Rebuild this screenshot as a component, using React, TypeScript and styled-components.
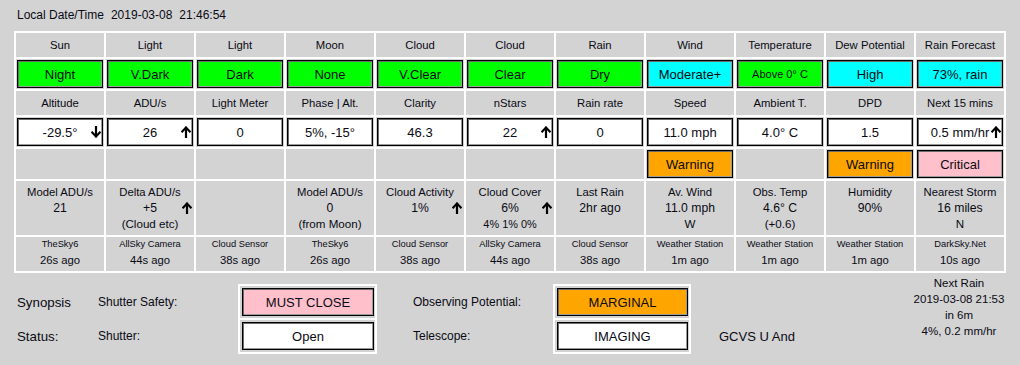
import React from "react";
import styled, { createGlobalStyle } from "styled-components";

type Tone = "green" | "cyan" | "orange" | "pink" | "white";
type Trend = "up" | "down";

const tones: Record<Tone, string> = {
  green: "#00ff00",
  cyan: "#00ffff",
  orange: "#ffa500",
  pink: "#ffc0cb",
  white: "#ffffff",
};

interface Column {
  head: string;
  status: string;
  tone: Tone;
  small?: boolean;
  sub: string;
  value: string;
  trend?: Trend;
  alert?: { text: string; tone: Tone };
  detail: string[];
  detailTrend?: Trend;
  noteSmall?: boolean;
  source: string;
  age: string;
}

const columns: Column[] = [
  { head: "Sun", status: "Night", tone: "green", sub: "Altitude", value: "-29.5°", trend: "down", detail: ["Model ADU/s", "21"], source: "TheSky6", age: "26s ago" },
  { head: "Light", status: "V.Dark", tone: "green", sub: "ADU/s", value: "26", trend: "up", detail: ["Delta ADU/s", "+5", "(Cloud etc)"], detailTrend: "up", source: "AllSky Camera", age: "44s ago" },
  { head: "Light", status: "Dark", tone: "green", sub: "Light Meter", value: "0", detail: [], source: "Cloud Sensor", age: "38s ago" },
  { head: "Moon", status: "None", tone: "green", sub: "Phase | Alt.", value: "5%, -15°", detail: ["Model ADU/s", "0", "(from Moon)"], source: "TheSky6", age: "26s ago" },
  { head: "Cloud", status: "V.Clear", tone: "green", sub: "Clarity", value: "46.3", detail: ["Cloud Activity", "1%"], detailTrend: "up", source: "Cloud Sensor", age: "38s ago" },
  { head: "Cloud", status: "Clear", tone: "green", sub: "nStars", value: "22", trend: "up", detail: ["Cloud Cover", "6%", "4% 1% 0%"], detailTrend: "up", noteSmall: true, source: "AllSky Camera", age: "44s ago" },
  { head: "Rain", status: "Dry", tone: "green", sub: "Rain rate", value: "0", detail: ["Last Rain", "2hr ago"], source: "Cloud Sensor", age: "38s ago" },
  { head: "Wind", status: "Moderate+", tone: "cyan", sub: "Speed", value: "11.0 mph", alert: { text: "Warning", tone: "orange" }, detail: ["Av. Wind", "11.0 mph", "W"], source: "Weather Station", age: "1m ago" },
  { head: "Temperature", status: "Above 0° C", tone: "green", small: true, sub: "Ambient T.", value: "4.0° C", detail: ["Obs. Temp", "4.6° C", "(+0.6)"], source: "Weather Station", age: "1m ago" },
  { head: "Dew Potential", status: "High", tone: "cyan", sub: "DPD", value: "1.5", alert: { text: "Warning", tone: "orange" }, detail: ["Humidity", "90%"], source: "Weather Station", age: "1m ago" },
  { head: "Rain Forecast", status: "73%, rain", tone: "cyan", sub: "Next 15 mins", value: "0.5 mm/hr", trend: "up", alert: { text: "Critical", tone: "pink" }, detail: ["Nearest Storm", "16 miles", "N"], source: "DarkSky.Net", age: "10s ago" },
];

const GlobalStyle = createGlobalStyle`
  body {
    margin: 0;
    background: #d3d3d3;
    font-family: "Liberation Sans", Arial, sans-serif;
    color: #0a0a14;
  }
`;

const Page = styled.div`
  padding: 7px 14px 0;
`;

const Header = styled.div`
  display: flex;
  gap: 7px;
  padding-left: 3px;
  height: 16px;
  line-height: 16px;
  font-size: 12px;
  margin-bottom: 8px;
`;

const Grid = styled.div`
  display: grid;
  grid-template-columns: repeat(11, 88px);
  grid-template-rows: 24px 30px 24px 30px 30px 54px 34px;
  gap: 2px;
  padding: 2px;
  background: #fff;
  width: fit-content;
`;

const Cell = styled.div`
  background: #d3d3d3;
  min-width: 0;
  overflow: hidden;
`;

const HeadCell = styled(Cell)`
  display: flex;
  align-items: center;
  justify-content: center;
  font-size: 11.3px;
  white-space: nowrap;
`;

const BoxCell = styled(Cell)`
  padding: 1px;
`;

const StatusBox = styled.div<{ $tone: Tone; $small?: boolean }>`
  position: relative;
  height: 100%;
  box-sizing: border-box;
  display: flex;
  align-items: center;
  justify-content: center;
  background: ${(p) => tones[p.$tone]};
  border: 1px solid #000;
  box-shadow: inset 1px 1px 0 #6a6a6a, inset -1px -1px 0 #9a9a9a;
  font-size: ${(p) => (p.$small ? "11px" : "13px")};
  white-space: nowrap;
`;

const ArrowWrap = styled.span<{ $right: number }>`
  position: absolute;
  right: ${(p) => p.$right}px;
  top: 50%;
  transform: translateY(-50%);
  display: flex;
`;

const DetailCell = styled(Cell)`
  display: flex;
  flex-direction: column;
  align-items: stretch;
  padding-top: 3px;
  text-align: center;
`;

const DetailLine = styled.div<{ $size: number }>`
  position: relative;
  font-size: ${(p) => p.$size}px;
  line-height: 16px;
  white-space: nowrap;
`;

const SourceCell = styled(Cell)`
  display: flex;
  flex-direction: column;
  text-align: center;
  white-space: nowrap;
`;

const SourceName = styled.div`
  font-size: 9.3px;
  line-height: 14px;
`;

const SourceAge = styled.div`
  font-size: 11.3px;
  line-height: 18px;
`;

const Footer = styled.div`
  display: flex;
  padding: 2px 0 0 3px;
`;

const LabelCol = styled.div<{ $width: number; $gap?: number }>`
  width: ${(p) => p.$width}px;
  margin-left: ${(p) => p.$gap ?? 0}px;
  margin-top: 9px;
  padding-top: 2px;
  display: flex;
  flex-direction: column;
  gap: 2px;
  flex-shrink: 0;
`;

const Label = styled.div<{ $size: number }>`
  height: 32px;
  display: flex;
  align-items: center;
  font-size: ${(p) => p.$size}px;
  white-space: nowrap;
`;

const BoxStack = styled.div<{ $width: number }>`
  width: ${(p) => p.$width}px;
  box-sizing: border-box;
  margin-top: 9px;
  align-self: flex-start;
  background: #fff;
  padding: 2px;
  display: flex;
  flex-direction: column;
  gap: 2px;
  flex-shrink: 0;
`;

const BoxSlot = styled.div`
  background: #d3d3d3;
  height: 32px;
  box-sizing: border-box;
  padding: 2px 1px 2px 2px;
`;

const NextRain = styled.div`
  margin-left: auto;
  width: 94px;
  text-align: center;
  font-size: 11.5px;
  line-height: 16px;
`;

function TrendArrow({ dir }: { dir: Trend }) {
  return (
    <svg width="10" height="12" viewBox="0 0 10 12">
      <g
        transform={dir === "down" ? "rotate(180 5 6)" : undefined}
        fill="none"
        stroke="#000"
        strokeWidth="2.2"
        strokeLinecap="square"
      >
        <path d="M5 11.5V1.8" />
        <path d="M1.3 5.4L5 1.6L8.7 5.4" />
      </g>
    </svg>
  );
}

export default function App() {
  return (
    <Page>
      <GlobalStyle />
      <Header>
        <span>Local Date/Time</span>
        <span>2019-03-08</span>
        <span>21:46:54</span>
      </Header>

      <Grid>
        {columns.map((c, i) => (
          <HeadCell key={`h${i}`}>{c.head}</HeadCell>
        ))}
        {columns.map((c, i) => (
          <BoxCell key={`s${i}`}>
            <StatusBox $tone={c.tone} $small={c.small}>
              {c.status}
            </StatusBox>
          </BoxCell>
        ))}
        {columns.map((c, i) => (
          <HeadCell key={`l${i}`}>{c.sub}</HeadCell>
        ))}
        {columns.map((c, i) => (
          <BoxCell key={`v${i}`}>
            <StatusBox $tone="white">
              {c.value}
              {c.trend && (
                <ArrowWrap $right={1}>
                  <TrendArrow dir={c.trend} />
                </ArrowWrap>
              )}
            </StatusBox>
          </BoxCell>
        ))}
        {columns.map((c, i) =>
          c.alert ? (
            <BoxCell key={`a${i}`}>
              <StatusBox $tone={c.alert.tone}>{c.alert.text}</StatusBox>
            </BoxCell>
          ) : (
            <Cell key={`a${i}`} />
          )
        )}
        {columns.map((c, i) => (
          <DetailCell key={`d${i}`}>
            {c.detail[0] && <DetailLine $size={11.3}>{c.detail[0]}</DetailLine>}
            {c.detail[1] && (
              <DetailLine $size={12.2}>
                {c.detail[1]}
                {c.detailTrend && (
                  <ArrowWrap $right={2}>
                    <TrendArrow dir={c.detailTrend} />
                  </ArrowWrap>
                )}
              </DetailLine>
            )}
            {c.detail[2] && (
              <DetailLine $size={c.noteSmall ? 10.9 : 11.6}>{c.detail[2]}</DetailLine>
            )}
          </DetailCell>
        ))}
        {columns.map((c, i) => (
          <SourceCell key={`r${i}`}>
            <SourceName>{c.source}</SourceName>
            <SourceAge>{c.age}</SourceAge>
          </SourceCell>
        ))}
      </Grid>

      <Footer>
        <LabelCol $width={81}>
          <Label $size={13.3}>Synopsis</Label>
          <Label $size={13.3}>Status:</Label>
        </LabelCol>
        <LabelCol $width={140}>
          <Label $size={12}>Shutter Safety:</Label>
          <Label $size={12}>Shutter:</Label>
        </LabelCol>
        <BoxStack $width={139}>
          <BoxSlot>
            <StatusBox $tone="pink">MUST CLOSE</StatusBox>
          </BoxSlot>
          <BoxSlot>
            <StatusBox $tone="white">Open</StatusBox>
          </BoxSlot>
        </BoxStack>
        <LabelCol $width={140} $gap={36}>
          <Label $size={12}>Observing Potential:</Label>
          <Label $size={12}>Telescope:</Label>
        </LabelCol>
        <BoxStack $width={138}>
          <BoxSlot>
            <StatusBox $tone="orange">MARGINAL</StatusBox>
          </BoxSlot>
          <BoxSlot>
            <StatusBox $tone="white">IMAGING</StatusBox>
          </BoxSlot>
        </BoxStack>
        <LabelCol $width={120} $gap={28}>
          <Label $size={13} />
          <Label $size={13}>GCVS U And</Label>
        </LabelCol>
        <NextRain>
          <div>Next Rain</div>
          <div>2019-03-08 21:53</div>
          <div>in 6m</div>
          <div>4%, 0.2 mm/hr</div>
        </NextRain>
      </Footer>
    </Page>
  );
}
